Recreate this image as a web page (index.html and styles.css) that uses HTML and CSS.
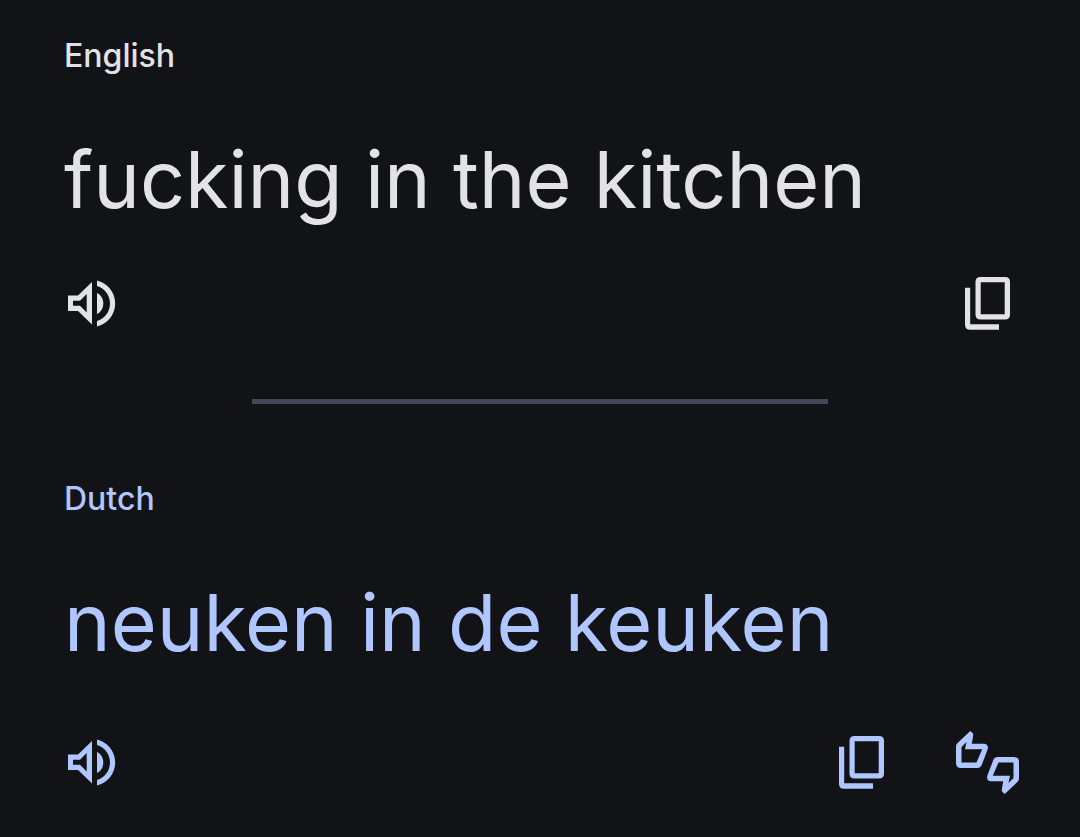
FILE: index.html
```html
<!DOCTYPE html>
<html lang="en">
<head>
    <meta charset="UTF-8">
    <meta name="viewport" content="width=device-width, initial-scale=1.0">
    <title>Translate</title>
    <link rel="stylesheet" href="styles.css">
</head>
<body>
    <svg class="sprite" aria-hidden="true">
        <symbol id="icon-speaker" viewBox="0 0 48 48">
            <path fill-rule="evenodd" d="M0 15.500H10L24 2V44.500L10 31H0ZM5 20.700V25.800H12L18.700 32.500V14L12 20.700Z"/>
            <path d="M29 13C33 15 35.300 19 35.300 23.500S33 32 29 34Z"/>
            <path d="M29 .6C39 2.800 47.200 12 47.200 23.500S39 44.200 29 46.400V41C36.500 38.800 42 32 42 23.500S36.500 8.200 29 6Z"/>
        </symbol>
        <symbol id="icon-copy" viewBox="0 0 45 54">
            <path fill-rule="evenodd" d="M15.500 0H40Q45 0 45 5V37.500Q45 42.500 40 42.500H15.500Q10.500 42.500 10.500 37.500V5Q10.500 0 15.500 0ZM15.700 5.300V37.200H39.700V5.300Z"/>
            <path d="M0 10.700H5.200V47.300H34V52.700H5Q0 52.700 0 47.700Z"/>
        </symbol>
        <symbol id="icon-thumbs" viewBox="0 0 64 64">
            <path id="thumb" fill-rule="evenodd" d="M0 15.500Q0 13.500 1.300 12.200L14.300 0L16.500 2Q17.500 3 17.200 4.500L15.800 12.700H28Q32.500 13 31.800 18L25.700 34Q24.500 37 21.500 37H5Q0 37 0 32ZM5.500 16V31.500H20.500L26.200 18.200H9L10.500 11Z"/>
            <use href="#thumb" transform="rotate(180 31.500 31.500)"/>
        </symbol>
    </svg>

    <main class="translation">
        <section class="panel source">
            <h2 class="language">English</h2>
            <p class="text">fucking in the kitchen</p>
            <div class="actions">
                <button class="icon-btn" aria-label="Listen"><svg class="speaker"><use href="#icon-speaker"/></svg></button>
                <button class="icon-btn push" aria-label="Copy"><svg class="copy"><use href="#icon-copy"/></svg></button>
            </div>
        </section>

        <hr class="divider">

        <section class="panel target">
            <h2 class="language">Dutch</h2>
            <p class="text">neuken in de keuken</p>
            <div class="actions">
                <button class="icon-btn" aria-label="Listen"><svg class="speaker"><use href="#icon-speaker"/></svg></button>
                <button class="icon-btn push" aria-label="Copy"><svg class="copy"><use href="#icon-copy"/></svg></button>
                <button class="icon-btn" aria-label="Rate this translation"><svg class="thumbs"><use href="#icon-thumbs"/></svg></button>
            </div>
        </section>
    </main>
</body>
</html>
```
FILE: styles.css
```css
* {
    margin: 0;
    padding: 0;
    box-sizing: border-box;
}

body {
    font-family: Inter, 'Liberation Sans', sans-serif;
    background-color: #121316;
    color: #e3e2e6;
}

.sprite {
    position: absolute;
    width: 0;
    height: 0;
}

.translation {
    padding: 36px 60px 0;
}

.panel {
    display: flex;
    flex-direction: column;
    padding-left: 4px;
}

.target {
    color: #b0c6ff;
}

.language {
    font-size: 32px;
    font-weight: 500;
    line-height: 40px;
}

.text {
    margin-top: 53px;
    font-size: 79px;
    line-height: 100px;
}

.actions {
    display: flex;
    align-items: center;
    gap: 72px;
    height: 64px;
    margin-top: 43px;
}

.target .actions {
    margin-top: 59px;
}

.icon-btn {
    display: flex;
    padding: 0;
    border: none;
    background: none;
    color: inherit;
    cursor: pointer;
}

.push {
    margin-left: auto;
}

.source .push {
    margin-right: 10px;
}

.icon-btn svg {
    fill: currentColor;
}

.speaker {
    width: 48px;
    height: 48px;
    margin-left: 4px;
}

.copy {
    width: 45px;
    height: 54px;
}

.thumbs {
    width: 64px;
    height: 64px;
}

.divider {
    width: 576px;
    max-width: 100%;
    height: 5px;
    margin: 63px auto 75px;
    border: none;
    background: #434956;
}
```
